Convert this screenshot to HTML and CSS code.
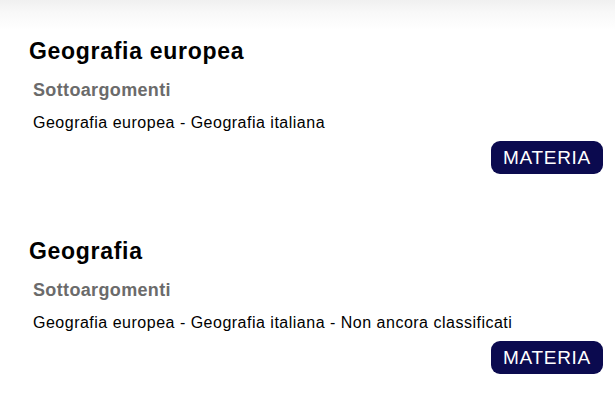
FILE: index.html
```html
<!DOCTYPE html>
<html lang="it">
<head>
<meta charset="utf-8">
<link rel="stylesheet" href="styles.css">
</head>
<body>
<div class="shade"></div>
<main class="list">
  <section class="item">
    <h2 class="title">Geografia europea</h2>
    <h3 class="sub">Sottoargomenti</h3>
    <p class="desc">Geografia europea - Geografia italiana</p>
    <div class="actions"><button class="btn">MATERIA</button></div>
  </section>
  <section class="item">
    <h2 class="title">Geografia</h2>
    <h3 class="sub">Sottoargomenti</h3>
    <p class="desc">Geografia europea - Geografia italiana - Non ancora classificati</p>
    <div class="actions"><button class="btn">MATERIA</button></div>
  </section>
</main>
</body>
</html>
```
FILE: styles.css
```css
html, body {
  margin: 0;
  padding: 0;
  background: #ffffff;
  font-family: "Liberation Sans", Arial, sans-serif;
  color: #000;
}
.shade {
  height: 30px;
  background: linear-gradient(to bottom, #f0f0f0 0%, #f8f8f8 40%, #ffffff 100%);
}
.list {
  padding: 8px 12px 0 29px;
  display: flex;
  flex-direction: column;
  gap: 64px;
}
.item {
  display: flex;
  flex-direction: column;
}
.title {
  margin: 0;
  font-size: 23px;
  line-height: 26px;
  letter-spacing: 0.7px;
  font-weight: bold;
}
.sub {
  margin: 16px 0 0 4px;
  font-size: 18px;
  line-height: 20px;
  letter-spacing: 0.35px;
  font-weight: bold;
  color: #6b6b6b;
}
.desc {
  margin: 14px 0 0 4px;
  font-size: 16px;
  line-height: 18px;
  letter-spacing: 0.5px;
}
.actions {
  display: flex;
  justify-content: flex-end;
  margin-top: 9px;
}
.btn {
  width: 112px;
  height: 33px;
  border: 0;
  border-radius: 9px;
  background: #0b0a4f;
  color: #ffffff;
  font-family: "Liberation Sans", Arial, sans-serif;
  font-size: 19px;
  letter-spacing: 0.7px;
  padding: 0;
}
```
